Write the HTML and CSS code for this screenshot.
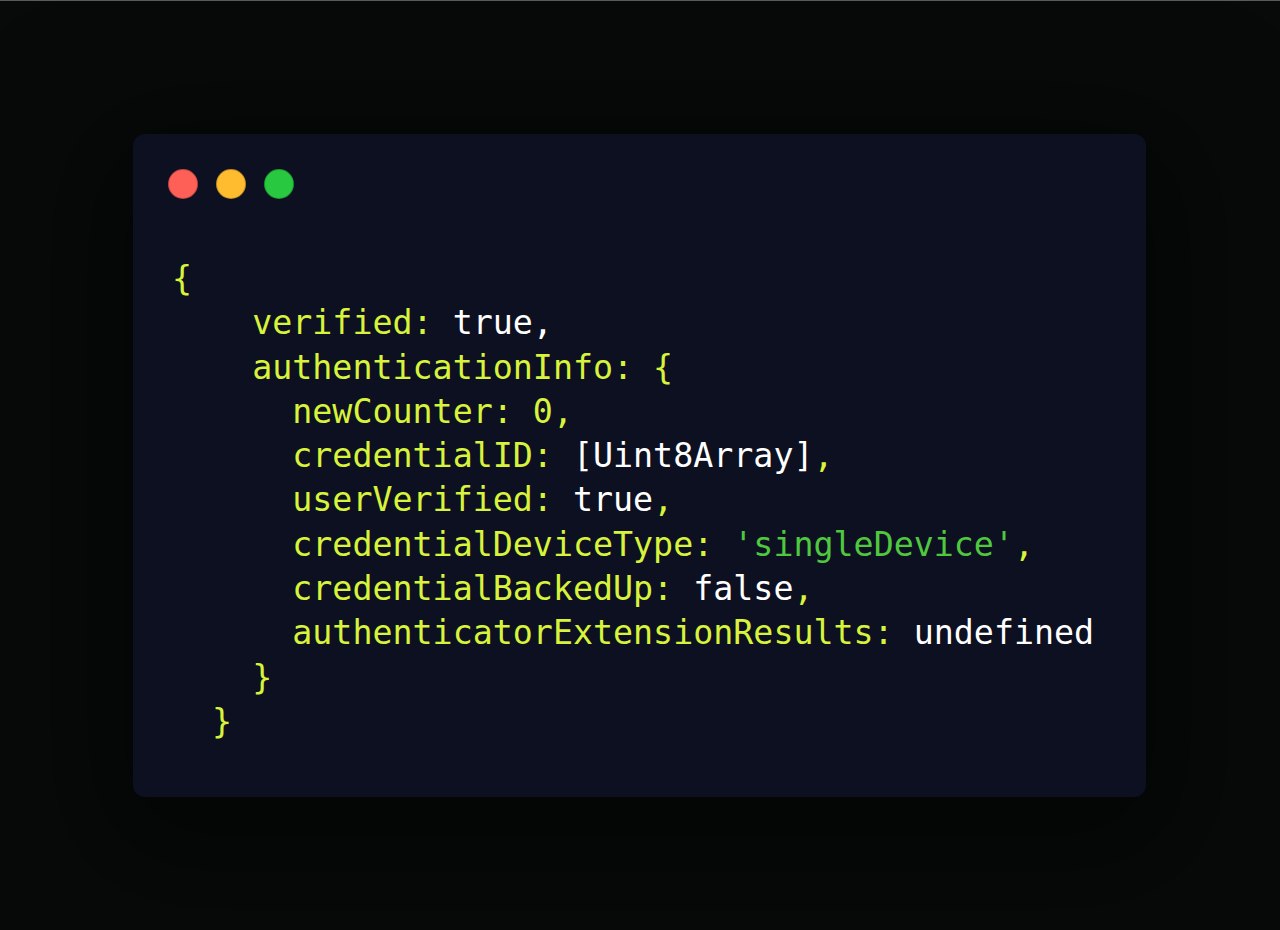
FILE: index.html
```html
<!DOCTYPE html>
<html>
<head>
<meta charset="utf-8">
<link rel="stylesheet" href="styles.css">
</head>
<body>
<div class="stage">
  <div class="window">
    <div class="dots">
      <span class="dot red"></span>
      <span class="dot yellow"></span>
      <span class="dot green"></span>
    </div>
<pre class="code"><span class="k">{</span>
<span class="k">    verified: </span><span class="v">true,</span>
<span class="k">    authenticationInfo: {</span>
<span class="k">      newCounter: 0,</span>
<span class="k">      credentialID: </span><span class="v">[Uint8Array]</span><span class="k">,</span>
<span class="k">      userVerified: </span><span class="v">true</span><span class="k">,</span>
<span class="k">      credentialDeviceType: </span><span class="s">'singleDevice'</span><span class="k">,</span>
<span class="k">      credentialBackedUp: </span><span class="v">false</span><span class="k">,</span>
<span class="k">      authenticatorExtensionResults: </span><span class="v">undefined</span>
<span class="k">    }</span>
<span class="k">  }</span></pre>
  </div>
</div>
</body>
</html>
```
FILE: styles.css
```css
html, body {
  margin: 0;
  padding: 0;
}
body {
  background: #080a0a;
  border-top: 1px solid #5a5a5a;
  height: 929px;
  overflow: hidden;
}
.stage {
  padding: 133px 0 0 133px;
}
.window {
  width: 1013px;
  height: 663px;
  box-sizing: border-box;
  background: #0d1020;
  border-radius: 12px;
  padding: 35px 0 0 35px;
  box-shadow: 0 30px 120px 40px rgba(0, 0, 0, 0.55);
}
.dots {
  display: flex;
  gap: 18px;
}
.dot {
  width: 30px;
  height: 30px;
  border-radius: 50%;
  box-sizing: border-box;
  border: 1px solid rgba(0, 0, 0, 0.25);
}
.red { background: #fe5f57; }
.yellow { background: #febc2e; }
.green { background: #28c840; }
.code {
  margin: 58px 0 0 4px;
  font-family: "DejaVu Sans Mono", monospace;
  font-size: 33.3px;
  line-height: 44.3px;
  color: #d8f33b;
}
.k { color: #d8f33b; }
.v { color: #ffffff; }
.s { color: #4fc83f; }
```
